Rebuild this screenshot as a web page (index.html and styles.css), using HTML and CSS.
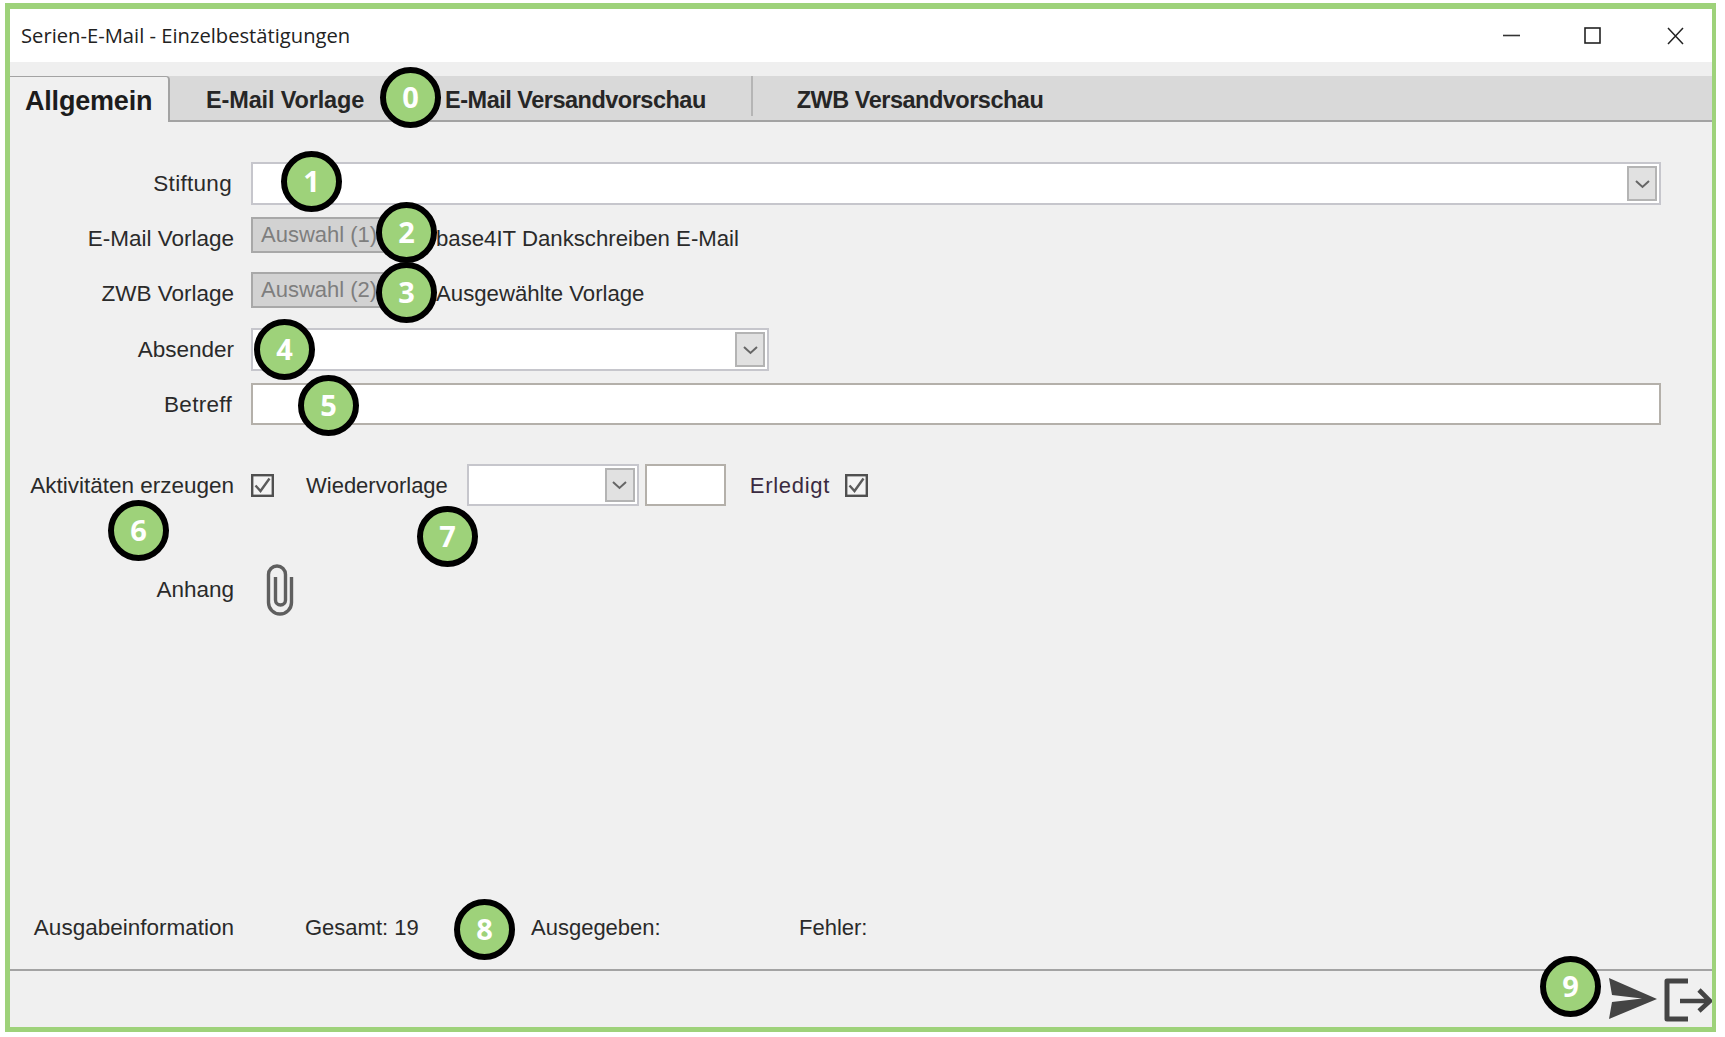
FILE: index.html
```html
<!DOCTYPE html>
<html lang="de">
<head>
<meta charset="utf-8">
<title>Serien-E-Mail - Einzelbestätigungen</title>
<link rel="stylesheet" href="styles.css">
</head>
<body>
<div class="window">
  <header class="titlebar">
    <span class="title">Serien-E-Mail - Einzelbestätigungen</span>
    <div class="controls">
      <svg class="ctl ctl-min" width="17" height="18" viewBox="0 0 17 18"><path d="M0 8.5H17" stroke="#333" stroke-width="1.6"/></svg>
      <svg class="ctl ctl-max" width="17" height="18" viewBox="0 0 17 18"><rect x="1" y="1" width="15" height="15" fill="none" stroke="#222" stroke-width="1.6"/></svg>
      <svg class="ctl ctl-close" width="17" height="18" viewBox="0 0 17 18"><path d="M1 1L16 17M16 1L1 17" stroke="#222" stroke-width="1.5" fill="none"/></svg>
    </div>
  </header>
  <div class="strip"></div>
  <nav class="tabs">
    <div class="tab tab-active">Allgemein</div>
    <div class="tab tab-mail">E-Mail Vorlage</div>
    <div class="tab tab-preview">E-Mail Versandvorschau</div>
    <div class="tab tab-zwb">ZWB Versandvorschau</div>
  </nav>
  <main class="form">
    <div class="row row-stiftung">
      <label class="label label-in">Stiftung</label>
      <div class="combo combo-full"><span class="drop"><svg width="17" height="10" viewBox="0 0 17 10"><path d="M2 2L8.5 8L15 2" fill="none" stroke="#666" stroke-width="2"/></svg></span></div>
    </div>
    <div class="row row-mail">
      <label class="label label-low">E-Mail Vorlage</label>
      <button class="pick">Auswahl (1)</button>
      <span class="value">base4IT Dankschreiben E-Mail</span>
    </div>
    <div class="row row-zwb">
      <label class="label label-low">ZWB Vorlage</label>
      <button class="pick">Auswahl (2)</button>
      <span class="value">Ausgewählte Vorlage</span>
    </div>
    <div class="row row-absender">
      <label class="label">Absender</label>
      <div class="combo combo-absender"><span class="drop"><svg width="17" height="10" viewBox="0 0 17 10"><path d="M2 2L8.5 8L15 2" fill="none" stroke="#666" stroke-width="2"/></svg></span></div>
    </div>
    <div class="row row-betreff">
      <label class="label label-in label-nudge">Betreff</label>
      <div class="input input-full"></div>
    </div>
    <div class="row row-options">
      <label class="label label-nudge">Aktivitäten erzeugen</label>
      <svg class="check" width="23" height="23" viewBox="0 0 23 23"><rect x="1.200" y="1.200" width="20.600" height="20.600" fill="#f4f4f4" stroke="#505050" stroke-width="2.400"/><path d="M4.500 11.500L9.500 17L18.500 4.500" fill="none" stroke="#5c5c5c" stroke-width="2.400"/></svg>
      <span class="opt-label opt-wieder">Wiedervorlage</span>
      <div class="combo combo-wieder"><span class="drop"><svg width="17" height="10" viewBox="0 0 17 10"><path d="M2 2L8.5 8L15 2" fill="none" stroke="#666" stroke-width="2"/></svg></span></div>
      <div class="input input-days"></div>
      <span class="opt-label opt-erledigt">Erledigt</span>
      <svg class="check" width="23" height="23" viewBox="0 0 23 23"><rect x="1.200" y="1.200" width="20.600" height="20.600" fill="#f4f4f4" stroke="#505050" stroke-width="2.400"/><path d="M4.500 11.500L9.500 17L18.500 4.500" fill="none" stroke="#5c5c5c" stroke-width="2.400"/></svg>
    </div>
    <div class="row row-anhang">
      <label class="label">Anhang</label>
      <svg class="clip" width="28" height="52" viewBox="0 0 28 52"><path d="M25.5 13V38.5a11.5 11.5 0 0 1-23 0V10.500a8.500 8.500 0 0 1 17 0V36a5 5 0 0 1-10 0V13" fill="none" stroke="#5f5f5f" stroke-width="3.400"/></svg>
    </div>
    <div class="row row-info">
      <span class="label">Ausgabeinformation</span>
      <span class="info info-total">Gesamt: 19</span>
      <span class="info info-out">Ausgegeben:</span>
      <span class="info">Fehler:</span>
    </div>
  </main>
  <footer class="footer">
    <svg class="send" width="49" height="42" viewBox="0 0 49 42"><path d="M0 0L48 21L0 41L3 24L33 20.500L3 17Z" fill="#444"/></svg>
    <svg class="exit" width="48" height="44" viewBox="0 0 48 44"><path d="M24 3H3V41H24" fill="none" stroke="#444" stroke-width="5" stroke-linejoin="round"/><path d="M16 23H45M35 12L46 23L35 33" fill="none" stroke="#444" stroke-width="4.600"/></svg>
  </footer>
  <span class="badge badge-0">0</span>
  <span class="badge badge-1">1</span>
  <span class="badge badge-2">2</span>
  <span class="badge badge-3">3</span>
  <span class="badge badge-4">4</span>
  <span class="badge badge-5">5</span>
  <span class="badge badge-6">6</span>
  <span class="badge badge-7">7</span>
  <span class="badge badge-8">8</span>
  <span class="badge badge-9">9</span>
</div>
</body>
</html>
```
FILE: styles.css
```css
* { box-sizing: border-box; }
html, body { margin: 0; padding: 0; background: #fff; }
body { width: 1725px; height: 1037px; overflow: hidden; font-family: "Liberation Sans", Arial, sans-serif; color: #2a2a2a; }

.window {
  position: relative;
  width: 1711px;
  height: 1029px;
  margin: 3px 0 0 5px;
  border: solid #9ed27a;
  border-width: 6px 4px 5px 5px;
  background: #f0f0f0;
  display: flex;
  flex-direction: column;
}

.titlebar {
  height: 53px;
  flex: none;
  background: #fff;
  display: flex;
  align-items: center;
  justify-content: space-between;
  padding: 0 28px 0 11px;
}
.title { font: 400 20.200px "Open Sans", sans-serif; color: #222; padding-bottom: 2px; }
.controls { display: flex; align-items: center; }
.ctl { display: block; }
.ctl-max { margin-left: 64px; }
.ctl-close { margin-left: 66px; }

.strip { height: 14px; flex: none; background: #efefef; }

.tabs {
  height: 46px;
  flex: none;
  display: flex;
  background: #d9d9d9;
  border-bottom: 2px solid #a3a3a3;
}
.tab {
  font-weight: 700;
  font-size: 23.500px;
  color: #262626;
  line-height: 48px;
  letter-spacing: -0.5px;
  white-space: nowrap;
}
.tab-active {
  width: 160px;
  height: 46px;
  padding-left: 15px;
  font-size: 27px;
  letter-spacing: -0.2px;
  color: #1c1c1c;
  background: #f0f0f0;
  border: 1px solid #a3a3a3;
  border-width: 1px 2px 0 0;
  border-radius: 0 4px 0 0;
}
.tab-mail { margin-left: 36px; letter-spacing: -0.150px; }
.tab-preview { margin-left: 81px; padding-right: 45px; border-right: 2px solid #b5b5b5; height: 40px; }
.tab-zwb { margin-left: 44px; }

.form { flex: 1; display: flex; flex-direction: column; padding-top: 40px; min-height: 0; }
.row { display: flex; align-items: center; padding-left: 224px; position: relative; }
.label {
  flex: none;
  width: 224px;
  margin-left: -224px;
  margin-right: 17px;
  text-align: right;
  font-size: 22.500px;
  white-space: nowrap;
}
.label-in { padding-right: 2px; letter-spacing: 0.300px; }
.label-low { padding-top: 8px; }
.label-nudge { padding-top: 2px; }

.row-stiftung { height: 43px; }
.row-mail { height: 36px; margin-top: 12px; }
.row-zwb { height: 36px; margin-top: 19px; }
.row-absender { height: 43px; margin-top: 20px; }
.row-betreff { height: 42px; margin-top: 12px; }
.row-options { height: 42px; margin-top: 39px; }
.row-anhang { height: 52px; margin-top: 58px; }
.row-info { margin-top: auto; height: 40px; margin-bottom: 21px; }

.combo {
  height: 100%;
  background: #fff;
  border: 2px solid #c6c6cc;
  display: flex;
  justify-content: flex-end;
  padding: 2px 2px;
}
.combo-full { width: 1410px; }
.combo-absender { width: 518px; }
.combo-wieder { width: 172px; }
.drop {
  width: 30px;
  background: #e1e1e1;
  border: 2px solid #b4b4b4;
  display: flex;
  align-items: center;
  justify-content: center;
}
.input { height: 100%; background: #fff; border: 2px solid #b4b0aa; }
.input-full { width: 1410px; }
.input-days { width: 81px; margin-left: 6px; }

.pick {
  width: 140px;
  height: 36px;
  padding: 0 0 0 8px;
  text-align: left;
  background: #d2d2d2;
  border: 2px solid #a8a8a8;
  font: 400 22px "Liberation Sans", Arial, sans-serif;
  color: #7e7e7e;
  white-space: nowrap;
  overflow: hidden;
}
.value { margin-left: 45px; font-size: 22.200px; padding-top: 8px; white-space: nowrap; }

.check { flex: none; }
.opt-label { font-size: 22px; padding-top: 2px; white-space: nowrap; }
.opt-wieder { margin-left: 32px; margin-right: 19px; }
.opt-erledigt { margin-left: 24px; margin-right: 15px; letter-spacing: 0.700px; color: #3a2a40; }

.clip { flex: none; margin-left: 15px; }

.info { font-size: 22px; white-space: nowrap; }
.info-total { margin-left: 54px; width: 226px; }
.info-out { width: 268px; }

.footer {
  height: 58px;
  flex: none;
  border-top: 2px solid #a3a3a3;
  display: flex;
  justify-content: flex-end;
  align-items: flex-start;
  padding-top: 7px;
}
.send { margin-right: 6px; }
.exit { margin-right: 0; }

.badge {
  position: absolute;
  width: 61px;
  height: 61px;
  border: 6px solid #000;
  border-radius: 50%;
  background: #9ed27a;
  color: #fff;
  font: 700 29px/47px "Open Sans", sans-serif;
  text-align: center;
}
.badge-0 { left: 370px; top: 58px; }
.badge-1 { left: 271px; top: 142px; }
.badge-2 { left: 366px; top: 193px; }
.badge-3 { left: 366px; top: 253px; }
.badge-4 { left: 244px; top: 310px; }
.badge-5 { left: 288px; top: 366px; }
.badge-6 { left: 98px; top: 491px; }
.badge-7 { left: 407px; top: 497px; }
.badge-8 { left: 444px; top: 890px; }
.badge-9 { left: 1530px; top: 947px; }
```
